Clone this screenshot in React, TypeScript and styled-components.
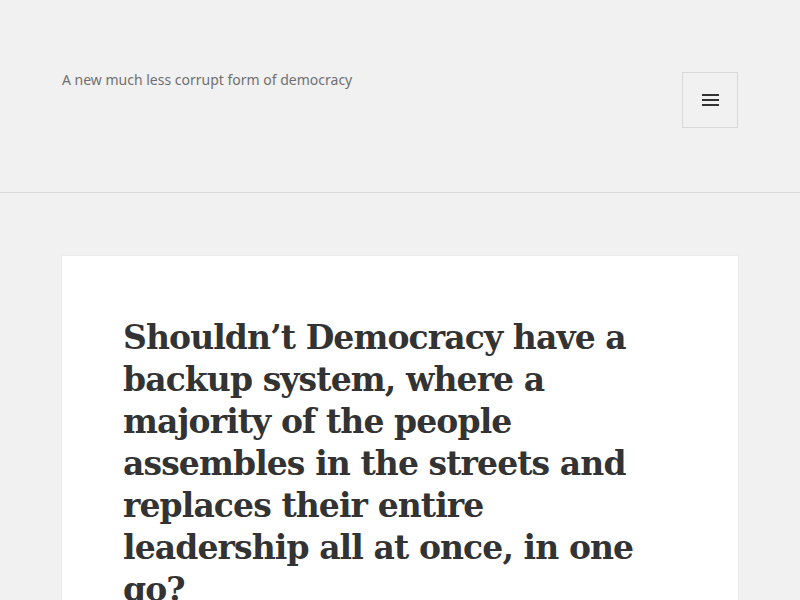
import React from "react";
import styled, { createGlobalStyle } from "styled-components";

const Global = createGlobalStyle`
  html, body { margin: 0; padding: 0; background: #f1f1f1; }
  body { font-family: "Noto Sans", sans-serif; color: #333; overflow: hidden; }
`;

const Page = styled.div`
  min-height: 600px;
  background: #f1f1f1;
`;

const Header = styled.header`
  display: flex;
  justify-content: space-between;
  align-items: flex-start;
  padding: 69px 62px 64px;
  border-bottom: 1px solid #dcdcdc;
`;

const Tagline = styled.p`
  margin: 0;
  font-family: "Noto Sans", sans-serif;
  font-size: 14px;
  line-height: 22px;
  color: #707070;
`;

const MenuButton = styled.button`
  margin-top: 3px;
  width: 56px;
  height: 56px;
  box-sizing: border-box;
  border: 1px solid #d9d9d9;
  background: transparent;
  display: flex;
  flex-direction: column;
  align-items: center;
  justify-content: center;
  gap: 3px;
  padding: 0;
`;

const Bar = styled.span`
  display: block;
  width: 17px;
  height: 2px;
  background: #333;
`;

const Main = styled.main`
  padding: 63px 62px 0;
`;

const Card = styled.article`
  background: #fff;
  padding: 61px 61px 40px;
  box-shadow: 0 0 1px rgba(0, 0, 0, 0.15);
`;

const Title = styled.h1`
  margin: 0;
  font-family: "DejaVu Serif", serif;
  font-weight: 700;
  font-size: 33px;
  letter-spacing: -0.9px;
  line-height: 42px;
  color: #333;
`;

export default function App() {
  return (
    <Page>
      <Global />
      <Header>
        <Tagline>A new much less corrupt form of democracy</Tagline>
        <MenuButton aria-label="Menu and widgets">
          <Bar />
          <Bar />
          <Bar />
        </MenuButton>
      </Header>
      <Main>
        <Card>
          <Title>
            Shouldn’t Democracy have a backup system, where a majority of the people
            assembles in the streets and replaces their entire leadership all at once,
            in one go?
          </Title>
        </Card>
      </Main>
    </Page>
  );
}
